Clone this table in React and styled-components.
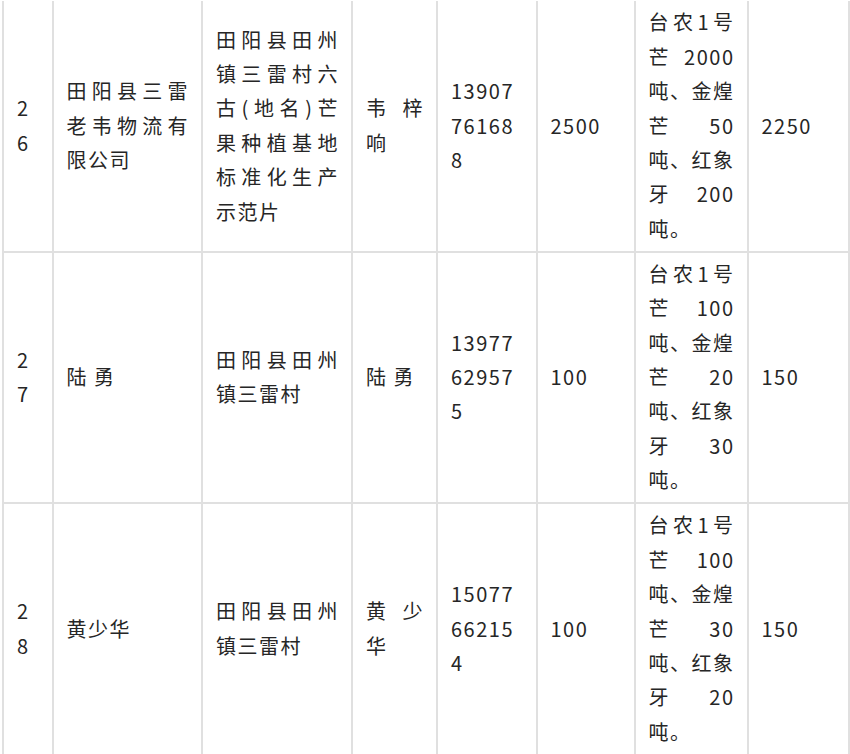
import React from "react";
import styled, { createGlobalStyle } from "styled-components";

const Global = createGlobalStyle`
  html, body { margin: 0; padding: 0; background: #fff; overflow: hidden; }
  * { box-sizing: border-box; }
`;

const Page = styled.div`
  padding: 1px 0 0 2px;
  width: 850px;
  height: 754px;
  overflow: hidden;
`;

const Grid = styled.div`
  display: grid;
  grid-template-columns: 49.5px 149.5px 150px 85px 99.5px 98px 113px 101px;
  grid-auto-rows: 251.5px;
  border-left: 2px solid #e0e0e0;
  width: max-content;
  font-family: "Noto Sans CJK SC", "Noto Sans", sans-serif;
  font-size: 20px;
  line-height: 34.4px;
  letter-spacing: 1.5px;
  color: #262626;
`;

const Cell = styled.div`
  display: flex;
  flex-direction: column;
  justify-content: center;
  padding: 0 12px 0 13px;
  border-right: 2px solid #e0e0e0;
  border-bottom: 2px solid #e0e0e0;
  white-space: nowrap;
`;

const Line = styled.div`
  text-align: ${(p) => (p.$justify ? "justify" : "left")};
  text-align-last: ${(p) => (p.$justify ? "justify" : "left")};
`;

const rows = [
  [
    [["2"], ["6"]],
    [["田阳县三雷", 1], ["老韦物流有", 1], ["限公司"]],
    [["田阳县田州", 1], ["镇三雷村六", 1], ["古(地名)芒", 1], ["果种植基地", 1], ["标准化生产", 1], ["示范片"]],
    [["韦梓", 1], ["响"]],
    [["13907"], ["76168"], ["8"]],
    [["2500"]],
    [["台农1号", 1], ["芒 2000", 1], ["吨、金煌", 1], ["芒 50", 1], ["吨、红象", 1], ["牙 200", 1], ["吨。"]],
    [["2250"]],
  ],
  [
    [["2"], ["7"]],
    [["陆 勇"]],
    [["田阳县田州", 1], ["镇三雷村"]],
    [["陆 勇"]],
    [["13977"], ["62957"], ["5"]],
    [["100"]],
    [["台农1号", 1], ["芒 100", 1], ["吨、金煌", 1], ["芒 20", 1], ["吨、红象", 1], ["牙 30", 1], ["吨。"]],
    [["150"]],
  ],
  [
    [["2"], ["8"]],
    [["黄少华"]],
    [["田阳县田州", 1], ["镇三雷村"]],
    [["黄少", 1], ["华"]],
    [["15077"], ["66215"], ["4"]],
    [["100"]],
    [["台农1号", 1], ["芒 100", 1], ["吨、金煌", 1], ["芒 30", 1], ["吨、红象", 1], ["牙 20", 1], ["吨。"]],
    [["150"]],
  ],
];

export default function App() {
  return (
    <>
      <Global />
      <Page>
        <Grid>
          {rows.map((row, ri) =>
            row.map((cell, ci) => (
              <Cell key={`${ri}-${ci}`}>
                {cell.map(([text, j], li) => (
                  <Line key={li} $justify={!!j}>
                    {text}
                  </Line>
                ))}
              </Cell>
            ))
          )}
        </Grid>
      </Page>
    </>
  );
}
